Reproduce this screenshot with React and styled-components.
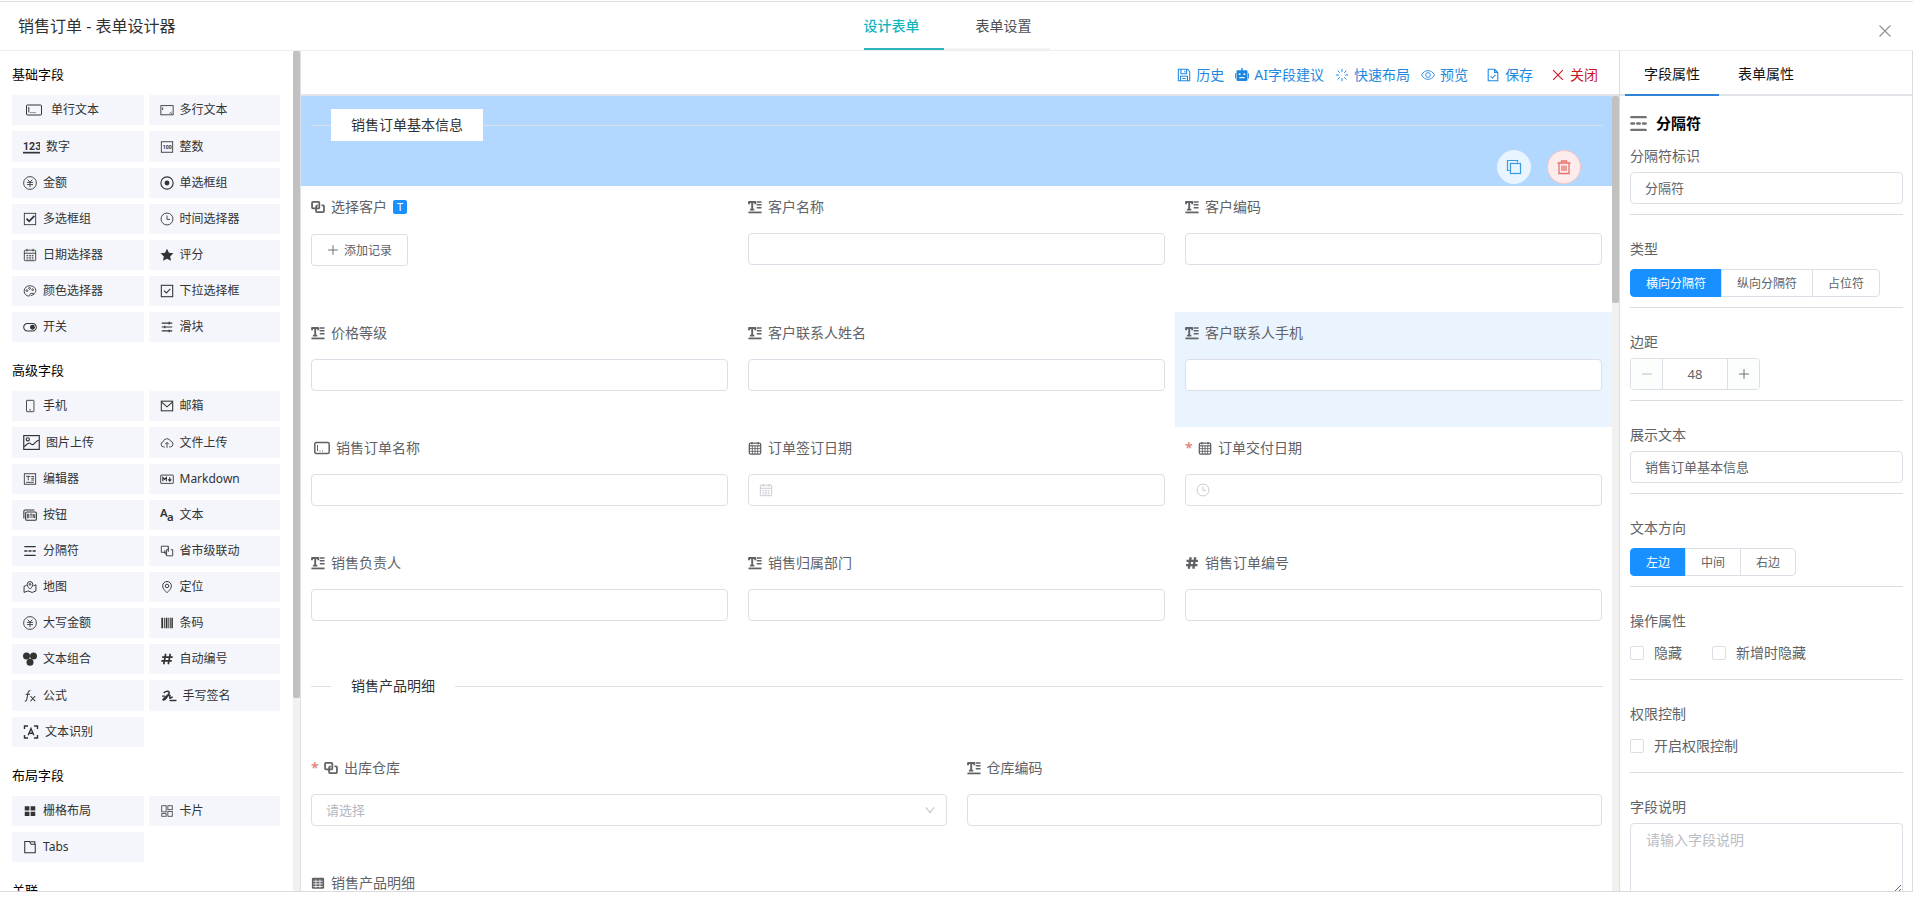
import React, { useState } from "react";
import styled, { createGlobalStyle } from "styled-components";

const GlobalStyle = createGlobalStyle`
  * {
    box-sizing: border-box;
  }

  body {
    margin: 0;
    background: #fff;
    font-family: "Noto Sans", "Noto Sans CJK SC", sans-serif;
    font-size: 14px;
    color: #606266;
  }

  button, input, select, textarea {
    font-family: inherit;
  }
`;

/* ---------- icons ---------- */

const line = { fill: "none", stroke: "currentColor", strokeWidth: 1 };

const icons = {
  input: (
    <g {...line}>
      <rect x="0.5" y="3" width="15" height="10" rx="1" />
      <path d="M2.8 5v5.5M4.5 10.6h1M6.5 10.6h1M8.5 10.6h1" />
    </g>
  ),
  textarea: (
    <g {...line}>
      <rect x="1" y="3" width="14" height="10.5" />
      <path d="M3 5v3M13.2 10l-2 2M13.5 12.3h-1" />
    </g>
  ),
  number: (
    <g fill="currentColor">
      <text x="0" y="11" fontSize="10" fontWeight="700" fontFamily="Roboto">123</text>
      <rect x="0" y="13" width="16" height="1.6" />
    </g>
  ),
  integer: (
    <g {...line}>
      <rect x="1.5" y="2" width="13" height="12" />
      <text x="3" y="10" fontSize="6" fontWeight="700" fontFamily="Roboto" fill="currentColor" stroke="none">100</text>
    </g>
  ),
  money: (
    <g {...line}>
      <circle cx="8" cy="8" r="7.300" />
      <path d="M5.200 4 8 7l2.800-3M4.500 7.300h7M4.500 9.800h7M8 7v5.800" />
    </g>
  ),
  radio: (
    <g>
      <circle {...line} strokeWidth="1.3" cx="8" cy="8" r="7" />
      <circle cx="8" cy="8" r="2.8" fill="currentColor" />
    </g>
  ),
  checkbox: (
    <g {...line}>
      <rect x="1.5" y="1.5" width="13" height="13" />
      <path d="m4 7.6 3 3 6-6.2" strokeWidth="2" />
    </g>
  ),
  clock: (
    <g {...line}>
      <circle cx="8" cy="8" r="6.8" />
      <path d="M8 4v4.5h3.500" />
    </g>
  ),
  calendar: (
    <g {...line}>
      <rect x="1.5" y="2.5" width="13" height="12" rx="1" />
      <path d="M1.5 6h13M4.5 1v3M11.5 1v3M4 8.5h2M7 8.5h2M10 8.5h2M4 10.5h2M7 10.5h2M10 10.5h2M4 12.5h2M7 12.5h2M10 12.5h2" />
    </g>
  ),
  calendarBold: (
    <g {...line} strokeWidth="1.5">
      <rect x="1.5" y="2.5" width="13" height="12.5" rx="1.5" />
      <path d="M1.5 5.5h13M4.5 1v3M11.5 1v3" />
      <path d="M1.5 8.7h13M1.5 11.8h13M5 6v9M8 6v9M11 6v9" strokeWidth="1" />
    </g>
  ),
  star: <path fill="currentColor" d="m8 .800 2.200 4.600 5.100.7-3.700 3.500.95 5.100L8 12.200l-4.550 2.500.95-5.100L.700 6.100l5.100-.7z" />,
  color: (
    <g {...line}>
      <path d="M8 2C4.2 2 1.3 4.6 1.3 8c0 3.3 2.6 5.8 5.2 5.8 1.8 0 1-1.900 1.800-2.700 1-1 3 .3 4.700-.6 1-.6 1.700-1.600 1.700-2.800C14.700 4.500 11.800 2 8 2z" />
      <circle cx="4.5" cy="7.5" r="1" />
      <circle cx="7.5" cy="5" r="1" />
      <circle cx="11" cy="6.5" r="1" />
      <path d="m9 13.5 4-2" />
    </g>
  ),
  select: (
    <g {...line} strokeWidth="1.2">
      <rect x="1.5" y="1.5" width="13" height="13" />
      <path d="m4.5 7.5 2.8 2.7 4.5-4.5" />
    </g>
  ),
  toggle: (
    <g>
      <rect {...line} strokeWidth="1.2" x="0.8" y="4" width="14.4" height="8.5" rx="4.2" />
      <circle cx="10.8" cy="8.2" r="2.8" fill="currentColor" />
    </g>
  ),
  slider: (
    <g {...line} strokeWidth="1.3">
      <path d="M2 3.5h12M2 8h12M2 12.5h12" />
      <path d="M10.5 2v3M5.5 6.5v3M10.5 11v3" />
    </g>
  ),
  phone: (
    <g {...line}>
      <rect x="4" y="1.5" width="8.5" height="13" rx="0.500" />
      <path d="M7.2 12.5h2" />
    </g>
  ),
  mail: (
    <g {...line} strokeWidth="1.2">
      <rect x="1.5" y="2.5" width="13" height="11" />
      <path d="m1.8 3.5 6.2 5.5 6.2-5.5" />
    </g>
  ),
  image: (
    <g {...line} strokeWidth="1.1">
      <rect x="0.7" y="1.5" width="14.6" height="13" />
      <circle cx="4.5" cy="5" r="1.5" />
      <path d="M.8 12c2-1 3.5-3.5 5-3.5s2 2 3.5 1.5S12 6 15 6" />
    </g>
  ),
  upload: (
    <g {...line}>
      <path d="M5.5 12.5H4a3 3 0 0 1-.4-5.900A4.500 4.500 0 0 1 12.200 6 3.300 3.300 0 0 1 12 12.500h-1.500" />
      <path d="M8 13.5V7.5M5.8 9.5 8 7.3l2.2 2.2" />
    </g>
  ),
  editor: (
    <g {...line}>
      <rect x="1.5" y="2" width="13" height="12" />
      <path d="M3.5 5h5M6 5v4.5M9.500 5.200h3.200M9.500 7.200h3.200M9.500 9.200h3.200M3.500 11.800h9" />
    </g>
  ),
  markdown: (
    <g {...line}>
      <rect x="0.8" y="3.5" width="14.4" height="9.5" rx="0.5" />
      <path d="M3.3 10.5V6.2l2 2.3 2-2.3v4.3M11.200 6v4.200M9.500 8.500l1.700 1.900 1.700-1.900" strokeWidth="1.300" />
    </g>
  ),
  button: (
    <g {...line} strokeWidth="1.2">
      <path d="M1 12V3.5C1 2.7 1.5 2.2 2.3 2.2H13" />
      <rect x="3" y="4.5" width="12.3" height="9.5" rx="1.5" />
      <path d="M5 7v4.2h1.700V7zM5 9.100h1.700M8 7h2.500M9.200 7v4.500M11.500 11.500V7l1.900 4.400V7" strokeWidth="0.9" />
    </g>
  ),
  text: (
    <g fill="currentColor" fontWeight="600">
      <text x="0" y="10" fontSize="13">A</text>
      <text x="8" y="15" fontSize="13">a</text>
    </g>
  ),
  divider: (
    <g {...line} strokeWidth="1.5">
      <path d="M1.5 3h13M1.5 13h13M1.5 8h3.500M6.300 8h3.400M11 8h3.500" />
    </g>
  ),
  dividerBold: (
    <g {...line} strokeWidth="2.300" strokeLinecap="round">
      <path d="M1.300 2h13.400M1.300 14h13.400M1.300 8h2.500M6.800 8h2.400M12.200 8h2.500" />
    </g>
  ),
  link: (
    <g {...line}>
      <path d="M7 9.5H1.5v-7h8V6M5.500 7v3.500c0 .6.300 1 1 1h1.200" />
      <path d="M9.5 6.5H7.5v7h7v-7h-2.200M9.500 4v5" />
    </g>
  ),
  relation: (
    <g {...line} strokeWidth="2">
      <rect x="1.2" y="2" width="8.3" height="7.5" rx="1" />
      <path d="M12 6.2h1.800c.6 0 1 .4 1 1v5.600c0 .6-.4 1-1 1H6.800c-.6 0-1-.4-1-1V8.500c0-1.300.7-2.300 2-2.300" />
    </g>
  ),
  map: (
    <g {...line} strokeWidth="1.1">
      <path d="M4.2 6 1.2 7.2v7l4.300-1.700 5 1.700 4.300-1.700v-7L12 6.500" />
      <path d="M8 10.5S4.8 7.7 4.8 5a3.200 3.200 0 0 1 6.400 0c0 2.700-3.200 5.500-3.200 5.500z" />
      <circle cx="8" cy="5" r="1" />
    </g>
  ),
  pin: (
    <g {...line} strokeWidth="1.1">
      <path d="M8 14.5S3 10.5 3 6.7a5 5 0 0 1 10 0c0 3.800-5 7.800-5 7.800z" />
      <circle cx="8" cy="6.8" r="2" />
    </g>
  ),
  barcode: (
    <g fill="currentColor">
      <path d="M1.500 2h2v12h-2zM4.500 2h1v12h-1zM6.500 2h2v12h-2zM9.500 2h1v12h-1zM11.300 2h1v12h-1zM13 2h1.700v12H13z" />
    </g>
  ),
  combine: (
    <g fill="currentColor">
      <circle cx="4" cy="4.500" r="4" />
      <circle cx="12" cy="4.500" r="4" />
      <circle cx="8" cy="11.800" r="4" />
    </g>
  ),
  hash: (
    <g {...line} strokeWidth="1.900">
      <path d="M6.5 2 4.300 14M11.700 2 9.500 14M2.500 5.800h12M1.500 10.200h12" />
    </g>
  ),
  hashBold: (
    <g {...line} strokeWidth="2.700">
      <path d="M6.500 1.500 4.300 14.500M11.700 1.500 9.500 14.500M1.800 5.500h13M1.200 10.500h13" />
    </g>
  ),
  formula: (
    <g {...line} strokeWidth="1.2">
      <path d="M8.5 2.3C6.800 1.700 6.100 2.600 5.800 4L4.300 12c-.3 1.500-1 2.100-2.300 1.700M3 6h5" />
      <path d="m8.5 8 5.500 6M14 8l-5.500 6" />
    </g>
  ),
  sign: (
    <g {...line} strokeWidth="1.4">
      <path d="M3.500 5.500c2.500-2 6-2 5 .5S4.500 10 3 11.500c-.8 1 1.200 1.300 2.500-.5s1.500-3.500 3.200-3.500-.5 3 .8 3 1.200-1.200 2.500-1.200" />
      <path d="M9 12.700h6.500M2 8.500h3" strokeWidth="1.2" />
    </g>
  ),
  scan: (
    <g {...line} strokeWidth="1.4">
      <path d="M1.500 5V2H5M11 2h3.500v3M14.500 11v3H11M5 14H1.500v-3" />
      <path d="M5.200 11.300 8 4.500l2.800 6.800M6.200 9.200h3.600" />
    </g>
  ),
  grid: <path fill="currentColor" d="M2 2.5h5.300v5H2zM8.700 2.500H14v5H8.700zM2 8.800h5.300v5H2zM8.700 8.800H14v5H8.700z" />,
  card: (
    <g {...line} strokeWidth="0.900">
      <rect x="2" y="2" width="5" height="7" />
      <rect x="9" y="2" width="5" height="4.500" />
      <rect x="2" y="11" width="5" height="3" />
      <rect x="9" y="8.500" width="5" height="5.500" />
    </g>
  ),
  tabs: (
    <g {...line} strokeWidth="1.2">
      <path d="M2 1.8h5.500l1.800 3H14v9.700H2z" />
      <path d="M8.5 2h5v2.500" />
    </g>
  ),
  lines: (
    <g {...line} strokeWidth="2.200">
      <path d="M.500 2.200h8.500M1.200 2v2.800M8.300 2v2.800M4.800 2.200v9.500M2.200 11h5" />
      <path d="M10 2.200h5.500M10 5.500h5.500M10 8.800h5.500" strokeWidth="1.700" />
      <path d="M.500 14.200h15" strokeWidth="2" />
    </g>
  ),
  inputBold: (
    <g {...line} strokeWidth="1.5">
      <rect x="0.8" y="2.5" width="14.4" height="11" rx="1.5" />
      <path d="M3.5 5v6M5.500 11h1M8 11h1" strokeWidth="1" />
    </g>
  ),
  table: (
    <g>
      <rect x="1" y="2" width="14" height="12.5" rx="1.5" fill="currentColor" />
      <path d="M2.5 6h11M2.500 9h11M2.500 12h11M5.700 4v9.500M10.200 4v9.500" stroke="#fff" strokeWidth="0.9" />
    </g>
  ),
  save: (
    <g {...line} strokeWidth="1.2">
      <path d="M1.5 1.5h10.500l2.500 2.500v10.500h-13z" />
      <path d="M4.5 1.5v5h6.500v-5M9 3v2M4 14.500V9.500h8v5M6 12h4" />
    </g>
  ),
  robot: (
    <g>
      <path fill="currentColor" d="M7.2 0h1.600v2.500H13c.8 0 1.300.5 1.300 1.300v9.700c0 .8-.5 1.300-1.300 1.300H3c-.8 0-1.300-.5-1.300-1.300V3.800c0-.8.5-1.300 1.300-1.300h4.200zM0 6h1v6H0zM15 6h1v6h-1z" />
      <circle cx="5.3" cy="7" r="1.1" fill="#fff" />
      <circle cx="10.7" cy="7" r="1.1" fill="#fff" />
      <path d="M5 11h6" stroke="#fff" strokeWidth="1.3" />
    </g>
  ),
  loading: (
    <g {...line} strokeWidth="1.1">
      <path d="M8 1v3.500M8 11.500V15M1 8h3.500M11.500 8H15M3 3l2.500 2.500M10.500 10.500 13 13M3 13l2.500-2.500M10.500 5.500 13 3" />
    </g>
  ),
  view: (
    <g {...line}>
      <path d="M.600 8C2.300 4.800 5 3 8 3s5.700 1.800 7.400 5c-1.700 3.200-4.400 5-7.400 5S2.300 11.200.600 8z" />
      <circle cx="8" cy="8" r="2.700" />
    </g>
  ),
  docCheck: (
    <g {...line} strokeWidth="1.2">
      <path d="M2.5 1.5h7.500l3.500 3.500v9.500h-11zM9.800 1.500V5h3.500" />
      <path d="m5.2 9.500 2.200 2 3.400-3.700" />
    </g>
  ),
  close: <path {...line} strokeWidth="1.2" d="m2.500 2.500 11 11M13.500 2.500l-11 11" />,
  plus: <path {...line} strokeWidth="1.2" d="M8 1.5v13M1.500 8h13" />,
  minus: <path {...line} strokeWidth="1.2" d="M1.5 8h13" />,
  down: <path {...line} strokeWidth="1.4" d="m2.500 4.500 5.500 7 5.500-7" />,
  copy: (
    <g {...line} strokeWidth="1.2">
      <path d="M3.8 11.5H1.5v-10h10v2" />
      <rect x="4.5" y="4.5" width="10" height="10" />
    </g>
  ),
  trash: (
    <g {...line} strokeWidth="1.3">
      <path d="M1.500 4h13M5.500 4V2h5v2M3 4v10.500h10V4M6 6.500v5.500M8 6.500v5.500M10 6.500v5.500" />
    </g>
  ),
};

const Svg = styled.svg`
  flex: none;
  display: block;
  color: ${({ $color }) => $color || "currentColor"};
`;

const Icon = ({ name, size = 14, color }) => (
  <Svg width={size} height={size} viewBox="0 0 16 16" $color={color} aria-hidden="true">
    {icons[name]}
  </Svg>
);

/* ---------- page frame ---------- */

const Page = styled.div`
  height: 100vh;
  display: flex;
  flex-direction: column;
  overflow: hidden;
`;

const TopEdge = styled.div`
  flex: none;
  height: 2px;
  border-bottom: 1px solid #dcdfe0;
`;

const Header = styled.header`
  flex: none;
  display: grid;
  grid-template-columns: 1fr auto 1fr;
  height: 49px;
  border-bottom: 1px solid #ebeef0;
`;

const PageTitle = styled.h1`
  margin: 0;
  padding-left: 18px;
  font-size: 16px;
  font-weight: 400;
  line-height: 48px;
  color: #303133;
`;

const PageTabs = styled.nav`
  display: flex;
`;

const PageTab = styled.button`
  border: 0;
  border-bottom: 2px solid ${({ $active }) => ($active ? "#2cb5bd" : "#f2f4f4")};
  background: none;
  padding: ${({ $active }) => ($active ? "1px 24px 0 0" : "1px 18px 0 32px")};
  font-size: 14px;
  font-weight: ${({ $active }) => ($active ? 500 : 400)};
  line-height: 45px;
  color: ${({ $active }) => ($active ? "#13b5bf" : "#4d4f52")};
`;

const CloseButton = styled.button`
  justify-self: end;
  align-self: center;
  margin: 10px 20px 0 0;
  padding: 0;
  border: 0;
  background: none;
  color: #909399;
`;

const Body = styled.div`
  flex: 1;
  min-height: 0;
  display: flex;
  border-bottom: 1px solid #d9dbdd;
`;

const BottomEdge = styled.div`
  flex: none;
  height: 10px;
`;

const ScrollTrack = styled.div`
  flex: none;
  width: 7px;
  background: #f1f1f1;
`;

const ScrollThumb = styled.div`
  height: ${({ $size }) => $size};
  border-radius: 2px;
  background: #c1c1c1;
`;

/* ---------- left: field palette ---------- */

const Sidebar = styled.aside`
  flex: none;
  width: 301px;
  display: flex;
  border-right: 1px solid #dcdfe6;
`;

const Palette = styled.div`
  flex: 1;
  overflow: hidden;
  padding: 14px 13px 0 12px;
`;

const PaletteTitle = styled.h2`
  margin: 0 0 12px;
  font-size: 13px;
  font-weight: 400;
  line-height: 18px;
  color: #000;
`;

const PaletteGrid = styled.div`
  display: grid;
  grid-template-columns: 1fr 1fr;
  gap: 6px 5px;
  margin-bottom: 19px;
`;

const PaletteItem = styled.button`
  display: flex;
  align-items: center;
  gap: ${({ $wide }) => ($wide ? 9 : 6)}px;
  padding: 7px 0 7px ${({ $wide }) => ($wide ? 14 : 11)}px;
  border: 0;
  background: #f4f6fc;
  font-size: 12px;
  line-height: 16px;
  color: #333;
`;

/* ---------- centre: form canvas ---------- */

const Main = styled.main`
  flex: 1;
  min-width: 0;
  display: flex;
  flex-direction: column;
`;

const Toolbar = styled.div`
  flex: none;
  display: flex;
  justify-content: flex-end;
  align-items: center;
  gap: 11px;
  height: 45px;
  padding: 4px 21px 0 0;
  border-bottom: 2px solid #e1e4e8;
`;

const ToolButton = styled.button`
  display: flex;
  align-items: center;
  gap: 5px;
  margin-left: ${({ $spaced }) => ($spaced ? 7 : 0)}px;
  padding: 0;
  border: 0;
  background: none;
  font-size: 14px;
  line-height: 20px;
  color: ${({ $danger }) => ($danger ? "#cf1322" : "#1e88e0")};
`;

const CanvasRow = styled.div`
  flex: 1;
  min-height: 0;
  display: flex;
`;

const Canvas = styled.form`
  flex: 1;
  min-width: 0;
  overflow: hidden;
`;

const SeparatorBlock = styled.section`
  position: relative;
  height: 90px;
  padding: 13px 9px 0 10px;
  background: ${({ $selected }) => ($selected ? "#b3d8ff" : "#fff")};
`;

const Separator = styled.div`
  display: flex;
  align-items: center;
  color: #303133;

  &::before,
  &::after {
    content: "";
    height: 1px;
    background: #dcdfe6;
  }

  &::before {
    width: 20px;
  }

  &::after {
    flex: 1;
  }
`;

const SeparatorText = styled.span`
  padding: 0 20px;
  background: #fff;
  line-height: 32px;
`;

// floats over the selected block
const BlockActions = styled.div`
  position: absolute;
  right: 31px;
  bottom: 2px;
  display: flex;
  gap: 16px;
`;

const RoundButton = styled.button`
  display: grid;
  place-items: center;
  width: 34px;
  height: 34px;
  padding: 0;
  border: 1px solid ${({ $danger }) => ($danger ? "#fbc4c4" : "#e8f4ff")};
  border-radius: 50%;
  background: ${({ $danger }) => ($danger ? "#fdecec" : "#e8f4ff")};
  color: ${({ $danger }) => ($danger ? "#e8716d" : "#3a9be0")};
`;

const FieldRow = styled.div`
  display: grid;
  grid-template-columns: repeat(${({ $cols }) => $cols}, 1fr);
  min-height: ${({ $tall }) => ($tall ? 126 : 115)}px;
`;

const FieldCell = styled.div`
  padding: 11px 10px 0;
  background: ${({ $hover }) => ($hover ? "#eaf4fe" : "transparent")};
`;

const FieldLabel = styled.label`
  display: flex;
  align-items: center;
  gap: 6px;
  margin-bottom: 16px;
  padding-left: ${({ $indent }) => ($indent ? 3 : 0)}px;
  line-height: 20px;
`;

const Required = styled.span`
  width: 7px;
  color: #e0705f;
`;

const TypeBadge = styled.span`
  width: 14px;
  height: 14px;
  border-radius: 2px;
  background: #1890ff;
  color: #fff;
  font-size: 11px;
  line-height: 14px;
  text-align: center;
`;

const Control = styled.div`
  display: flex;
  align-items: center;
  height: 32px;
  padding: 0 10px;
  border: 1px solid #dcdfe6;
  border-radius: 4px;
  background: #fff;
  color: #c0c4cc;
`;

const BareInput = styled.input`
  flex: 1;
  min-width: 0;
  border: 0;
  outline: 0;
  background: none;
  font-size: 13px;
  color: #606266;
`;

const BareSelect = styled.select`
  flex: 1;
  appearance: none;
  border: 0;
  outline: 0;
  padding: 0 4px;
  background: none;
  font-size: 13px;
  color: #b4b8bf;
`;

const AddButton = styled.button`
  display: flex;
  align-items: center;
  gap: 5px;
  height: 32px;
  margin-top: 17px;
  padding: 0 15px;
  border: 1px solid #dcdfe6;
  border-radius: 3px;
  background: #fff;
  font-size: 12px;
  color: #606266;
`;

/* ---------- right: properties ---------- */

const Properties = styled.aside`
  flex: none;
  width: 294px;
  overflow: hidden;
  border-left: 1px solid #d9dce2;
  border-right: 1px solid #d9dce2;
`;

const PropTabs = styled.nav`
  display: flex;
  height: 45px;
  padding-left: 5px;
  border-bottom: 2px solid #e1e4e8;
`;

const PropTab = styled.button`
  height: 45px;
  padding: 0 19px;
  border: 0;
  border-bottom: 2px solid ${({ $active }) => ($active ? "#2f84d6" : "transparent")};
  background: none;
  font-size: 14px;
  color: #111;
`;

const PropBody = styled.div`
  padding: 15px 9px 0 10px;
`;

const PropHeading = styled.h2`
  display: flex;
  align-items: center;
  gap: 9px;
  margin: 0;
  font-size: 15px;
  line-height: 24px;
  color: #000;
`;

const PropSection = styled.section`
  padding: ${({ $first }) => ($first ? 11 : 24)}px 0 10px;
  border-bottom: 1px solid #d9dce0;
`;

const PropLabel = styled.label`
  display: block;
  margin-bottom: 6px;
  line-height: 20px;
`;

const PropControl = styled.div`
  display: flex;
  align-items: ${({ $bottom }) => ($bottom ? "flex-end" : "center")};
  height: 32px;
`;

const TextInput = styled.input`
  width: 100%;
  height: 32px;
  padding: 0 15px 2px 14px;
  border: 1px solid #dcdfe6;
  border-radius: 4px;
  font-size: 13px;
  color: #606266;
`;

const Segment = styled.button`
  height: 28px;
  margin-left: -1px;
  padding: 0 15px;
  border: 1px solid ${({ $active }) => ($active ? "#1890ff" : "#dcdfe6")};
  background: ${({ $active }) => ($active ? "#1890ff" : "#fff")};
  font-size: 12px;
  color: ${({ $active }) => ($active ? "#fff" : "#606266")};

  &:first-child {
    margin-left: 0;
    border-radius: 4px 0 0 4px;
  }

  &:last-child {
    border-radius: 0 4px 4px 0;
  }
`;

const Stepper = styled.div`
  display: flex;
  width: 130px;
  height: 32px;
  border: 1px solid #dcdfe6;
  border-radius: 4px;
  overflow: hidden;
`;

const StepButton = styled.button`
  display: grid;
  place-items: center;
  width: 31px;
  padding: 0;
  border: 0;
  background: #fcfdfd;
  color: ${({ $muted }) => ($muted ? "#b4b8bf" : "#606266")};
`;

const StepInput = styled.input`
  flex: 1;
  min-width: 0;
  padding: 0;
  border: 0;
  border-left: 1px solid #dcdfe6;
  border-right: 1px solid #dcdfe6;
  text-align: center;
  font-size: 13px;
  color: #606266;
`;

const CheckLabel = styled.label`
  display: flex;
  align-items: center;
  gap: 10px;
  margin-right: 30px;
  line-height: 18px;
`;

const CheckBox = styled.input`
  appearance: none;
  width: 14px;
  height: 14px;
  margin: 0;
  border: 1px solid #dcdfe6;
  border-radius: 2px;
  background: #fff;

  &:checked {
    background: #1890ff;
  }
`;

const NoteArea = styled.textarea`
  display: block;
  width: 100%;
  height: 71px;
  padding: 6px 15px;
  border: 1px solid #dcdfe6;
  border-radius: 4px;
  resize: vertical;
  font-size: 14px;
  line-height: 20px;

  &::placeholder {
    color: #b9bdc4;
  }
`;

/* ---------- data ---------- */

const palette = [
  {
    title: "基础字段",
    items: [
      { icon: "input", label: "单行文本", size: 16, wide: true },
      { icon: "textarea", label: "多行文本" },
      { icon: "number", label: "数字", size: 17 },
      { icon: "integer", label: "整数" },
      { icon: "money", label: "金额" },
      { icon: "radio", label: "单选框组" },
      { icon: "checkbox", label: "多选框组" },
      { icon: "clock", label: "时间选择器" },
      { icon: "calendar", label: "日期选择器" },
      { icon: "star", label: "评分" },
      { icon: "color", label: "颜色选择器" },
      { icon: "select", label: "下拉选择框" },
      { icon: "toggle", label: "开关" },
      { icon: "slider", label: "滑块" },
    ],
  },
  {
    title: "高级字段",
    items: [
      { icon: "phone", label: "手机" },
      { icon: "mail", label: "邮箱" },
      { icon: "image", label: "图片上传", size: 17 },
      { icon: "upload", label: "文件上传" },
      { icon: "editor", label: "编辑器" },
      { icon: "markdown", label: "Markdown" },
      { icon: "button", label: "按钮" },
      { icon: "text", label: "文本" },
      { icon: "divider", label: "分隔符" },
      { icon: "link", label: "省市级联动" },
      { icon: "map", label: "地图" },
      { icon: "pin", label: "定位" },
      { icon: "money", label: "大写金额" },
      { icon: "barcode", label: "条码" },
      { icon: "combine", label: "文本组合" },
      { icon: "hash", label: "自动编号" },
      { icon: "formula", label: "公式" },
      { icon: "sign", label: "手写签名", size: 17 },
      { icon: "scan", label: "文本识别", size: 16 },
    ],
  },
  {
    title: "布局字段",
    items: [
      { icon: "grid", label: "栅格布局" },
      { icon: "card", label: "卡片" },
      { icon: "tabs", label: "Tabs" },
    ],
  },
  { title: "关联", items: [] },
];

const orderRows = [
  [
    { icon: "relation", label: "选择客户", kind: "add", badge: "T" },
    { icon: "lines", label: "客户名称" },
    { icon: "lines", label: "客户编码" },
  ],
  [
    { icon: "lines", label: "价格等级" },
    { icon: "lines", label: "客户联系人姓名" },
    { icon: "lines", label: "客户联系人手机", hover: true },
  ],
  [
    { icon: "inputBold", label: "销售订单名称", size: 16, indent: true },
    { icon: "calendarBold", label: "订单签订日期", prefix: "calendar" },
    { icon: "calendarBold", label: "订单交付日期", prefix: "clock", required: true },
  ],
  [
    { icon: "lines", label: "销售负责人" },
    { icon: "lines", label: "销售归属部门" },
    { icon: "hashBold", label: "销售订单编号" },
  ],
];

const detailRows = [
  [
    { icon: "relation", label: "出库仓库", kind: "select", required: true },
    { icon: "lines", label: "仓库编码" },
  ],
];

const tools = [
  { icon: "save", label: "历史" },
  { icon: "robot", label: "AI字段建议" },
  { icon: "loading", label: "快速布局" },
  { icon: "view", label: "预览" },
  { icon: "docCheck", label: "保存", spaced: true },
  { icon: "close", label: "关闭", spaced: true, danger: true },
];

/* ---------- components ---------- */

const Field = ({ id, field }) => (
  <FieldCell $hover={field.hover}>
    <FieldLabel htmlFor={id} $indent={field.indent}>
      {field.required && <Required>*</Required>}
      <Icon name={field.icon} size={field.size} />
      {field.label}
      {field.badge && <TypeBadge>{field.badge}</TypeBadge>}
    </FieldLabel>
    {field.kind === "add" && (
      <AddButton id={id} type="button">
        <Icon name="plus" size={12} />
        添加记录
      </AddButton>
    )}
    {field.kind === "select" && (
      <Control>
        <BareSelect id={id}>
          <option>请选择</option>
        </BareSelect>
        <Icon name="down" size={12} />
      </Control>
    )}
    {!field.kind && (
      <Control>
        {field.prefix && <Icon name={field.prefix} />}
        <BareInput id={id} type="text" />
      </Control>
    )}
  </FieldCell>
);

const FieldRows = ({ rows, prefix, firstTall }) =>
  rows.map((row, r) => (
    <FieldRow key={r} $cols={row.length} $tall={firstTall && r === 0}>
      {row.map((field, c) => (
        <Field key={field.label} id={`${prefix}-${r}-${c}`} field={field} />
      ))}
    </FieldRow>
  ));

const Segments = ({ options }) => {
  const [value, setValue] = useState(options[0]);
  return (
    <PropControl $bottom>
      {options.map((option) => (
        <Segment key={option} type="button" $active={option === value} onClick={() => setValue(option)}>
          {option}
        </Segment>
      ))}
    </PropControl>
  );
};

const PropertiesPanel = () => {
  const [margin, setMargin] = useState(48);
  const [text, setText] = useState("销售订单基本信息");

  return (
    <Properties>
      <PropTabs>
        <PropTab $active>字段属性</PropTab>
        <PropTab>表单属性</PropTab>
      </PropTabs>
      <PropBody>
        <PropHeading>
          <Icon name="dividerBold" size={17} color="#707276" />
          分隔符
        </PropHeading>
        <PropSection $first>
          <PropLabel htmlFor="mark">分隔符标识</PropLabel>
          <TextInput id="mark" defaultValue="分隔符" />
        </PropSection>
        <PropSection>
          <PropLabel as="div">类型</PropLabel>
          <Segments options={["横向分隔符", "纵向分隔符", "占位符"]} />
        </PropSection>
        <PropSection>
          <PropLabel htmlFor="margin">边距</PropLabel>
          <Stepper>
            <StepButton $muted aria-label="减少" onClick={() => setMargin(margin - 1)}>
              <Icon name="minus" size={12} />
            </StepButton>
            <StepInput id="margin" value={margin} onChange={(e) => setMargin(Number(e.target.value) || 0)} />
            <StepButton aria-label="增加" onClick={() => setMargin(margin + 1)}>
              <Icon name="plus" size={12} />
            </StepButton>
          </Stepper>
        </PropSection>
        <PropSection>
          <PropLabel htmlFor="text">展示文本</PropLabel>
          <TextInput id="text" value={text} onChange={(e) => setText(e.target.value)} />
        </PropSection>
        <PropSection>
          <PropLabel as="div">文本方向</PropLabel>
          <Segments options={["左边", "中间", "右边"]} />
        </PropSection>
        <PropSection>
          <PropLabel as="div">操作属性</PropLabel>
          <PropControl>
            <CheckLabel>
              <CheckBox type="checkbox" />
              隐藏
            </CheckLabel>
            <CheckLabel>
              <CheckBox type="checkbox" />
              新增时隐藏
            </CheckLabel>
          </PropControl>
        </PropSection>
        <PropSection>
          <PropLabel as="div">权限控制</PropLabel>
          <PropControl>
            <CheckLabel>
              <CheckBox type="checkbox" />
              开启权限控制
            </CheckLabel>
          </PropControl>
        </PropSection>
        <PropSection>
          <PropLabel htmlFor="note">字段说明</PropLabel>
          <NoteArea id="note" placeholder="请输入字段说明" />
        </PropSection>
      </PropBody>
    </Properties>
  );
};

const App = () => (
  <Page>
    <GlobalStyle />
    <TopEdge />
    <Header>
      <PageTitle>销售订单 - 表单设计器</PageTitle>
      <PageTabs>
        <PageTab $active>设计表单</PageTab>
        <PageTab>表单设置</PageTab>
      </PageTabs>
      <CloseButton aria-label="关闭">
        <Icon name="close" size={16} />
      </CloseButton>
    </Header>
    <Body>
      <Sidebar>
        <Palette>
          {palette.map((group) => (
            <React.Fragment key={group.title}>
              <PaletteTitle>{group.title}</PaletteTitle>
              <PaletteGrid>
                {group.items.map((item) => (
                  <PaletteItem key={item.label} $wide={item.wide}>
                    <Icon name={item.icon} size={item.size} />
                    {item.label}
                  </PaletteItem>
                ))}
              </PaletteGrid>
            </React.Fragment>
          ))}
        </Palette>
        <ScrollTrack>
          <ScrollThumb $size="77%" />
        </ScrollTrack>
      </Sidebar>
      <Main>
        <Toolbar>
          {tools.map((tool) => (
            <ToolButton key={tool.label} $spaced={tool.spaced} $danger={tool.danger}>
              <Icon name={tool.icon} />
              {tool.label}
            </ToolButton>
          ))}
        </Toolbar>
        <CanvasRow>
          <Canvas>
            <SeparatorBlock $selected>
              <Separator>
                <SeparatorText>销售订单基本信息</SeparatorText>
              </Separator>
              <BlockActions>
                <RoundButton type="button" aria-label="复制">
                  <Icon name="copy" size={16} />
                </RoundButton>
                <RoundButton type="button" aria-label="删除" $danger>
                  <Icon name="trash" size={16} />
                </RoundButton>
              </BlockActions>
            </SeparatorBlock>
            <FieldRows rows={orderRows} prefix="order" firstTall />
            <SeparatorBlock>
              <Separator>
                <SeparatorText>销售产品明细</SeparatorText>
              </Separator>
            </SeparatorBlock>
            <FieldRows rows={detailRows} prefix="detail" />
            <FieldCell>
              <FieldLabel as="div">
                <Icon name="table" />
                销售产品明细
              </FieldLabel>
            </FieldCell>
          </Canvas>
          <ScrollTrack>
            <ScrollThumb $size="26%" />
          </ScrollTrack>
        </CanvasRow>
      </Main>
      <PropertiesPanel />
    </Body>
    <BottomEdge />
  </Page>
);

export default App;
